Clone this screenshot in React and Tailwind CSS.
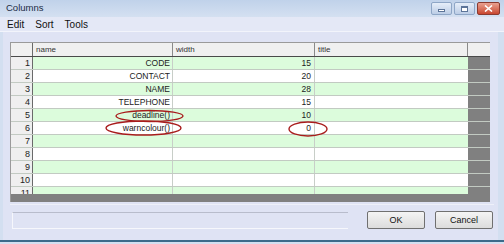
import React from 'react';

// column spec for the grid: row-number column then name / width / title
const rows = [
  { name: 'CODE', width: '15' },
  { name: 'CONTACT', width: '20' },
  { name: 'NAME', width: '28' },
  { name: 'TELEPHONE', width: '15' },
  { name: 'deadline()', width: '10' },
  { name: 'warncolour()', width: '0' },
  { name: '', width: '' },
  { name: '', width: '' },
  { name: '', width: '' },
  { name: '', width: '' },
  { name: '', width: '' },
];

const TitleButton = ({ kind }) => {
  if (kind === 'close') {
    return (
      <div className="w-[23px] h-[13px] rounded-[2px] border border-[#8a3a30] bg-gradient-to-b from-[#e8a090] to-[#c8452f] flex items-center justify-center">
        <svg width="9" height="7" viewBox="0 0 9 7">
          <path d="M1 0.5 L8 6.5 M8 0.5 L1 6.5" stroke="#fff" strokeWidth="1.6" />
        </svg>
      </div>
    );
  }
  return (
    <div className="w-[21px] h-[13px] rounded-[2px] border border-[#8ea6c6] bg-gradient-to-b from-[#e6eef9] to-[#bccde6] flex items-center justify-center">
      {kind === 'min' ? (
        <div className="w-[7px] h-[3px] mt-[4px] bg-white border border-[#5c7498]" />
      ) : (
        <div className="w-[7px] h-[6px] bg-white border border-[#5c7498] border-t-2" />
      )}
    </div>
  );
};

const GridRow = ({ idx, row }) => {
  const green = idx % 2 === 0;
  const bg = green ? 'bg-[#dcfcdc]' : 'bg-white';
  return (
    <div className="flex h-[13px] shrink-0 border-b border-[#c2cac2]">
      <div className="w-[22px] shrink-0 bg-[#efefef] border-r border-[#6a6a6a] text-right pr-[2px] leading-[12px] text-[9px] text-[#222]">
        {idx + 1}
      </div>
      <div className={`w-[140px] shrink-0 ${bg} border-r border-[#c8cec8] text-right pr-[2px] leading-[12px] text-[8.5px] text-[#222]`}>
        {row.name}
      </div>
      <div className={`w-[142px] shrink-0 ${bg} border-r border-[#c8cec8] text-right pr-[3px] leading-[12px] text-[8.5px] text-[#222]`}>
        {row.width}
      </div>
      <div className={`w-[153px] shrink-0 ${bg}`} />
    </div>
  );
};

const App = () => {
  return (
    <div className="w-[504px] h-[244px] relative overflow-hidden bg-[#dfe3f4] flex flex-col font-['Liberation_Sans',Arial,sans-serif] text-[#111]">
      {/* Title bar */}
      <div className="h-[17px] shrink-0 bg-gradient-to-b from-[#c0d2ea] to-[#d4e0f1] flex items-center pl-[6px] pr-[4px]">
        <span className="text-[9.5px] text-[#1b2a44]">Columns</span>
        <div className="ml-auto flex gap-[2px]">
          <TitleButton kind="min" />
          <TitleButton kind="max" />
          <TitleButton kind="close" />
        </div>
      </div>

      {/* Menu bar */}
      <div className="h-[15px] shrink-0 bg-[#e4e8f6] flex items-center gap-[11px] pl-[7px] text-[10px] border-b border-[#f2f4fb]">
        <span>Edit</span>
        <span>Sort</span>
        <span>Tools</span>
      </div>

      {/* Client area */}
      <div className="flex-1 flex flex-col pl-[10px] pr-[4px] pt-[10px] border-l-[3px] border-r-[6px] border-[#d3dff0]">
        <div className="w-[480px] h-[160px] -ml-[3px] bg-[#808080] border-t border-l border-[#9a9a9a] overflow-hidden flex flex-col">
          {/* header */}
          <div className="flex h-[14px] shrink-0 bg-[#f0f0f0] border-b border-[#4a4a4a]">
            <div className="w-[22px] shrink-0 border-r border-[#6a6a6a]" />
            <div className="w-[140px] shrink-0 border-r border-[#8a8a8a] pl-[3px] leading-[13px] text-[8px] text-[#333]">name</div>
            <div className="w-[142px] shrink-0 border-r border-[#8a8a8a] pl-[3px] leading-[13px] text-[8px] text-[#333]">width</div>
            <div className="w-[153px] shrink-0 border-r border-[#8a8a8a] pl-[3px] leading-[13px] text-[8px] text-[#333]">title</div>
          </div>
          <div className="h-[137px] shrink-0 overflow-hidden flex flex-col">
            {rows.map((row, i) => (
              <GridRow key={i} idx={i} row={row} />
            ))}
          </div>
        </div>

        {/* bottom strip */}
        <div className="mt-[2px] -ml-[3px] h-px bg-[#eef0f9]" />
        <div className="flex items-start mt-[7px] -ml-[1px]">
          <div className="w-[336px] h-[17px] border-t border-[#b8bccc] border-l border-l-[#f6f7fc] border-b border-b-[#f6f7fc]" />
          <button className="ml-[19px] w-[58px] h-[18px] -mt-[1px] rounded-[2px] border border-[#707070] bg-gradient-to-b from-[#f4f4f4] to-[#dcdcdc] text-[9px] text-[#111] leading-none">
            OK
          </button>
          <button className="ml-[10px] w-[58px] h-[18px] -mt-[1px] rounded-[2px] border border-[#707070] bg-gradient-to-b from-[#f4f4f4] to-[#dcdcdc] text-[9px] text-[#111] leading-none">
            Cancel
          </button>
        </div>
      </div>

      {/* bottom frame */}
      <div className="h-[4px] shrink-0 bg-[#d3dff0] border-t-2 border-[#3c6a8a]" />

      {/* red annotation ellipses */}
      <svg className="absolute left-0 top-0 pointer-events-none" width="504" height="244">
        <ellipse cx="149.5" cy="116" rx="33.5" ry="5.5" fill="none" stroke="#a81c1c" strokeWidth="1.4" />
        <ellipse cx="143.5" cy="128" rx="37.5" ry="7" fill="none" stroke="#a81c1c" strokeWidth="1.4" />
        <ellipse cx="308" cy="129" rx="19" ry="7" fill="none" stroke="#a81c1c" strokeWidth="1.4" />
      </svg>
    </div>
  );
};

export default App;
